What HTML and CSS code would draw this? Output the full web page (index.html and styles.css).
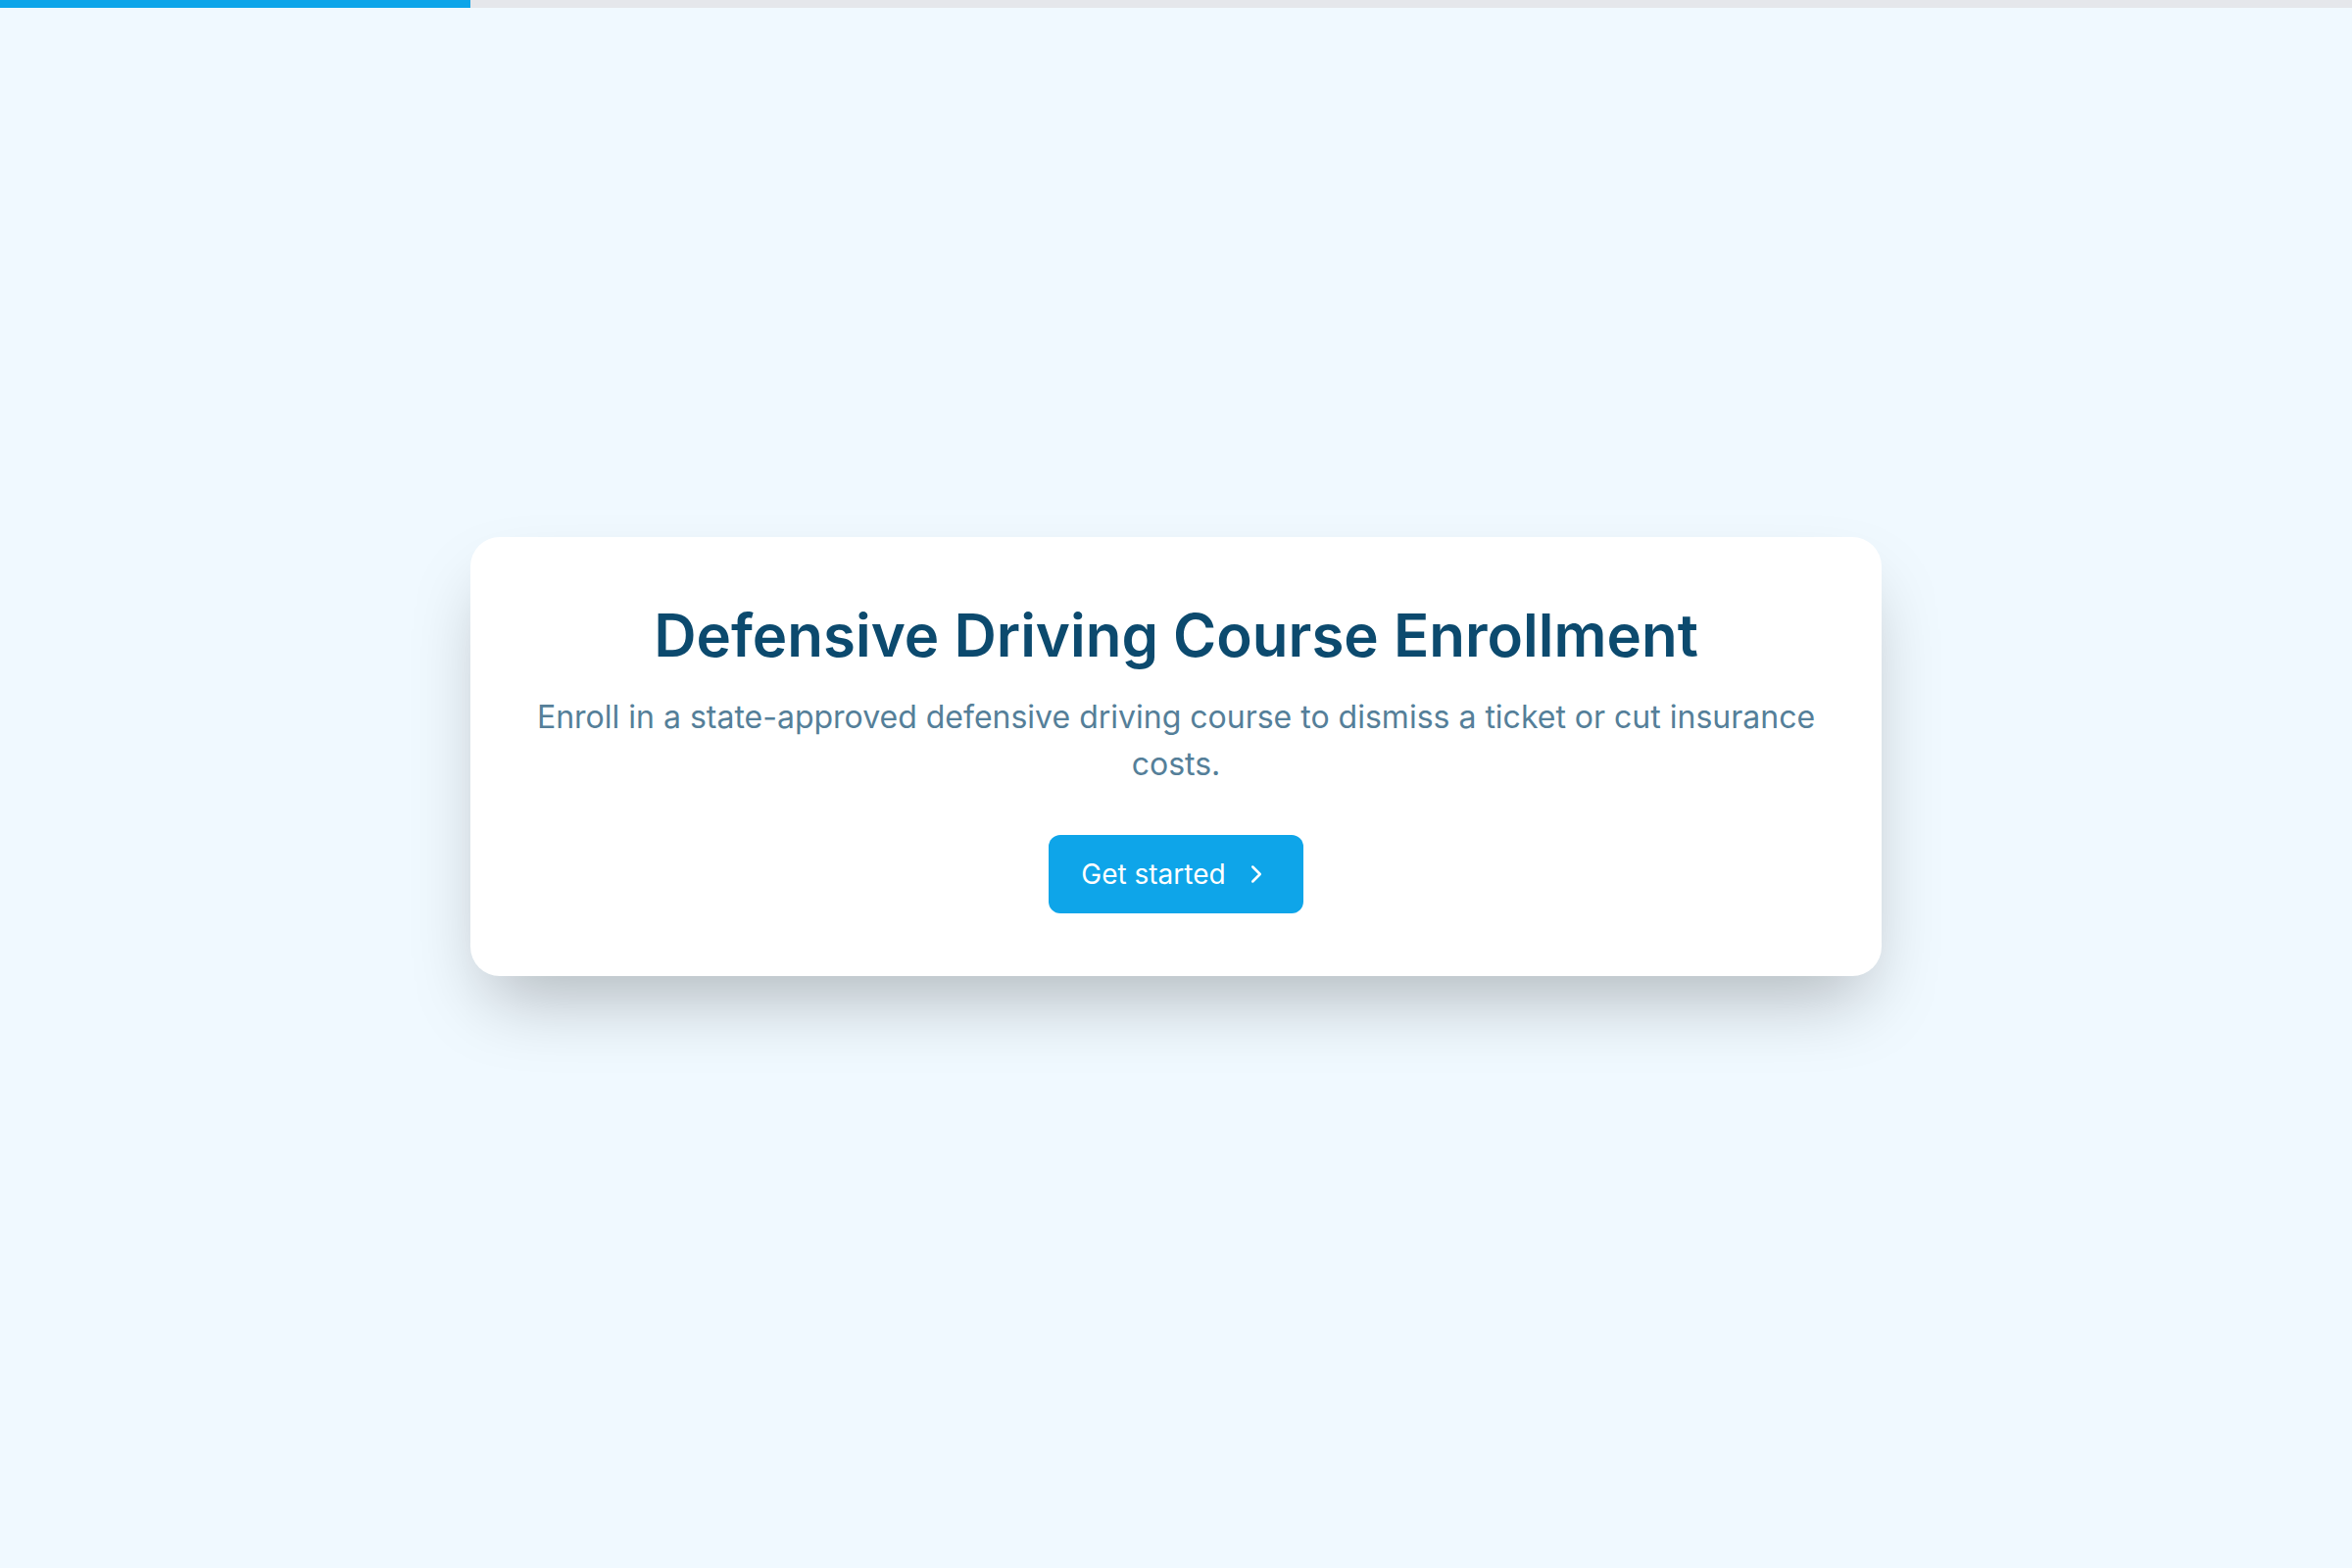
FILE: index.html
```html
<!DOCTYPE html>
<html lang="en">
<head>
<meta charset="utf-8">
<title>Defensive Driving Course Enrollment</title>
<link rel="stylesheet" href="styles.css">
</head>
<body>
  <div class="progress"><div class="progress-fill" style="width: 20%"></div></div>
  <main class="main">
    <section class="card">
      <h1 class="title">Defensive Driving Course Enrollment</h1>
      <p class="subtitle">Enroll in a state-approved defensive driving course to dismiss a ticket or cut insurance costs.</p>
      <button class="btn" type="button">
        <span>Get started</span>
        <svg class="btn-icon" viewBox="0 0 24 24" fill="none" stroke="currentColor" stroke-width="2" stroke-linecap="round" stroke-linejoin="round"><path d="m9 18 6-6-6-6"/></svg>
      </button>
    </section>
  </main>
</body>
</html>
```

FILE: styles.css
```css
* { box-sizing: border-box; }
html, body { margin: 0; padding: 0; }
body {
  background: #f0f9ff;
  font-family: Inter, "Noto Sans", "Liberation Sans", sans-serif;
  min-height: 100vh;
}
.progress {
  height: 8px;
  background: #e5e7eb;
  width: 100%;
}
.progress-fill {
  height: 100%;
  background: #0ea5e9;
}
.main {
  height: calc(100vh - 8px);
  display: flex;
  flex-direction: column;
  align-items: center;
  justify-content: center;
  padding-bottom: 64px;
}
.card {
  width: 1440px;
  background: #ffffff;
  border-radius: 30px;
  padding: 64px;
  text-align: center;
  box-shadow: 0 38px 76px -18px rgba(0, 0, 0, 0.27);
}
.title {
  margin: 0;
  font-size: 60px;
  line-height: 72px;
  font-weight: 600;
  color: #0c4a6e;
}
.subtitle {
  margin: 24px 0 0;
  font-size: 32px;
  line-height: 48px;
  font-weight: 400;
  color: #557f99;
}
.btn {
  margin-top: 48px;
  display: inline-flex;
  align-items: center;
  gap: 16px;
  height: 80px;
  padding: 0 33px;
  border: none;
  border-radius: 12px;
  background: #0ea5e9;
  color: #ffffff;
  font-family: inherit;
  font-size: 28px;
  font-weight: 400;
  cursor: pointer;
}
.btn-icon {
  width: 30px;
  height: 30px;
}
```
